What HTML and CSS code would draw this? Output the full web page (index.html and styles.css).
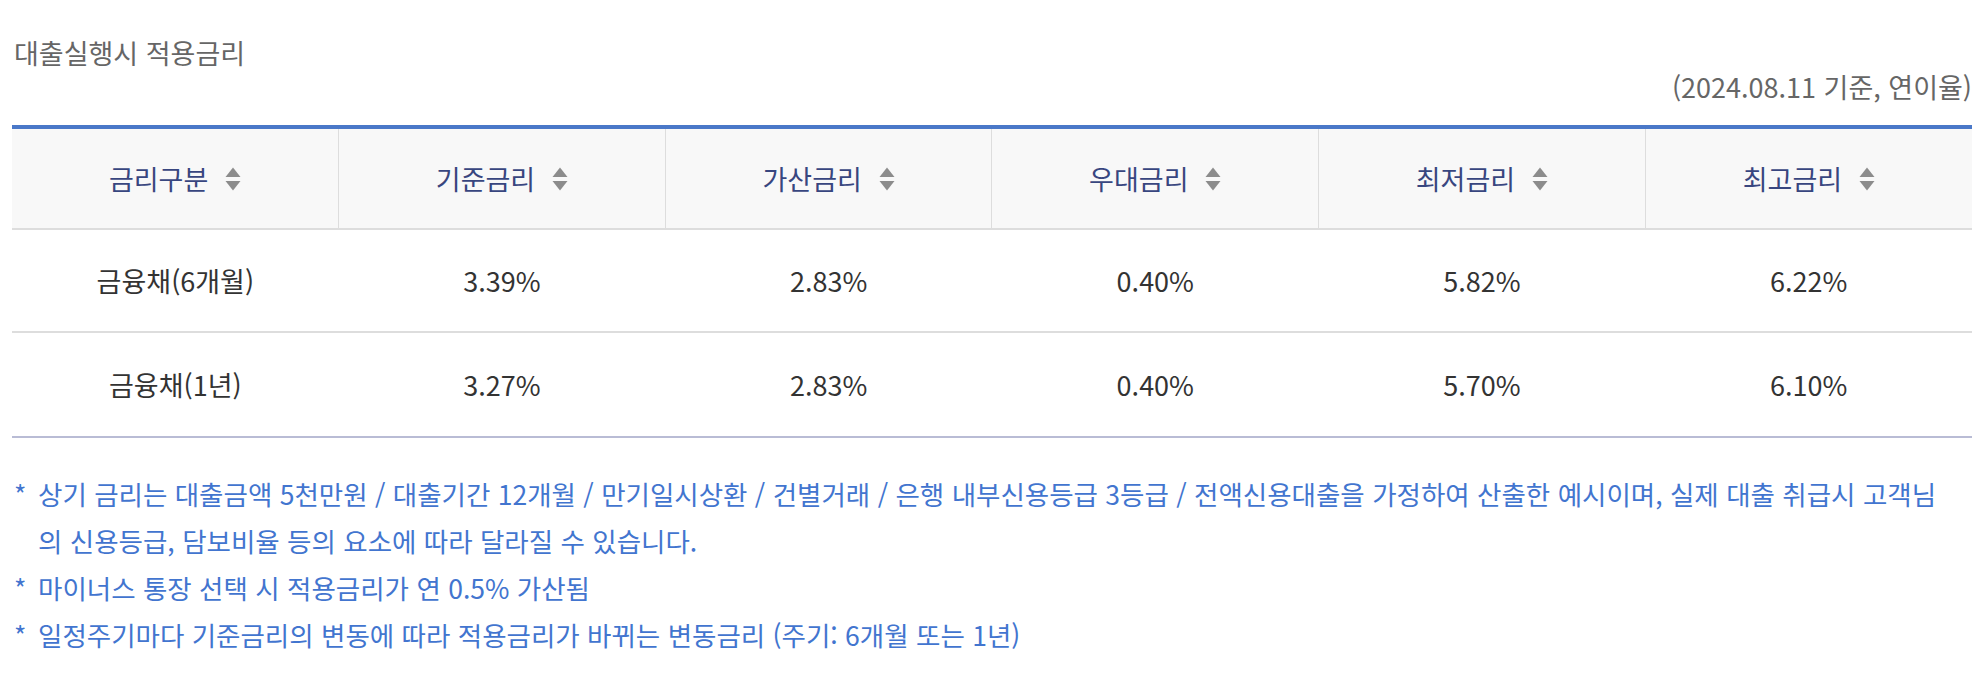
FILE: index.html
```html
<!DOCTYPE html>
<html lang="ko">
<head>
<meta charset="utf-8">
<title>대출실행시 적용금리</title>
<link rel="stylesheet" href="styles.css">
</head>
<body>
<div class="wrap">
  <h2 class="title">대출실행시 적용금리</h2>
  <p class="basis">(2024.08.11 기준, 연이율)</p>
  <table class="rate-table">
    <thead>
      <tr>
        <th><span class="th-in">금리구분<svg class="sort" viewBox="0 0 16 24"><path d="M8 0.5 L15.5 10 L0.5 10 Z"/><path d="M0.5 14 L15.5 14 L8 23.5 Z"/></svg></span></th>
        <th><span class="th-in">기준금리<svg class="sort" viewBox="0 0 16 24"><path d="M8 0.5 L15.5 10 L0.5 10 Z"/><path d="M0.5 14 L15.5 14 L8 23.5 Z"/></svg></span></th>
        <th><span class="th-in">가산금리<svg class="sort" viewBox="0 0 16 24"><path d="M8 0.5 L15.5 10 L0.5 10 Z"/><path d="M0.5 14 L15.5 14 L8 23.5 Z"/></svg></span></th>
        <th><span class="th-in">우대금리<svg class="sort" viewBox="0 0 16 24"><path d="M8 0.5 L15.5 10 L0.5 10 Z"/><path d="M0.5 14 L15.5 14 L8 23.5 Z"/></svg></span></th>
        <th><span class="th-in">최저금리<svg class="sort" viewBox="0 0 16 24"><path d="M8 0.5 L15.5 10 L0.5 10 Z"/><path d="M0.5 14 L15.5 14 L8 23.5 Z"/></svg></span></th>
        <th><span class="th-in">최고금리<svg class="sort" viewBox="0 0 16 24"><path d="M8 0.5 L15.5 10 L0.5 10 Z"/><path d="M0.5 14 L15.5 14 L8 23.5 Z"/></svg></span></th>
      </tr>
    </thead>
    <tbody>
      <tr>
        <td>금융채(6개월)</td><td>3.39%</td><td>2.83%</td><td>0.40%</td><td>5.82%</td><td>6.22%</td>
      </tr>
      <tr>
        <td>금융채(1년)</td><td>3.27%</td><td>2.83%</td><td>0.40%</td><td>5.70%</td><td>6.10%</td>
      </tr>
    </tbody>
  </table>
  <ul class="notes">
    <li><span class="star">*</span><span class="txt">상기 금리는 대출금액 5천만원 / 대출기간 12개월 / 만기일시상환 / 건별거래 / 은행 내부신용등급 3등급 / 전액신용대출을 가정하여 산출한 예시이며, 실제 대출 취급시 고객님의 신용등급, 담보비율 등의 요소에 따라 달라질 수 있습니다.</span></li>
    <li><span class="star">*</span><span class="txt">마이너스 통장 선택 시 적용금리가 연 0.5% 가산됨</span></li>
    <li><span class="star">*</span><span class="txt">일정주기마다 기준금리의 변동에 따라 적용금리가 바뀌는 변동금리 (주기: 6개월 또는 1년)</span></li>
  </ul>
</div>
</body>
</html>
```

FILE: styles.css
```css
html, body {
  margin: 0;
  padding: 0;
  background: #ffffff;
}
body {
  font-family: "Noto Sans CJK KR", "Noto Sans", sans-serif;
  color: #333333;
}
.wrap {
  width: 1960px;
  padding: 0 14px 0 12px;
}
.title {
  margin: 0;
  padding-top: 36px;
  padding-left: 2px;
  font-size: 27px;
  font-weight: 400;
  line-height: 34px;
  color: #666666;
}
.basis {
  margin: 0;
  font-size: 27px;
  line-height: 34px;
  color: #666666;
  text-align: right;
}
.rate-table {
  margin-top: 21px;
  width: 100%;
  border-collapse: collapse;
  table-layout: fixed;
  border-top: 4px solid #4a78c8;
}
.rate-table th {
  height: 99px;
  padding: 0;
  background: #f8f8f8;
  border-bottom: 2px solid #dddddd;
  border-left: 1px solid #dddddd;
  font-size: 27px;
  font-weight: 400;
  color: #38467f;
}
.rate-table th:first-child {
  border-left: none;
}
.th-in {
  display: inline-flex;
  align-items: center;
  gap: 17px;
}
.sort {
  width: 16px;
  height: 24px;
  fill: #8c8c8c;
}
.rate-table td {
  height: 101px;
  padding: 0;
  text-align: center;
  font-size: 27px;
  color: #333333;
  border-bottom: 2px solid #dddddd;
}
.rate-table tbody tr:last-child td {
  height: 103px;
  border-bottom: 2px solid #b9bcd5;
}
.notes {
  list-style: none;
  margin: 0;
  padding: 32px 32px 0 0;
  color: #4275cf;
  font-size: 26.5px;
  line-height: 47px;
}
.notes li {
  display: flex;
}
.star {
  flex: none;
  width: 26px;
  padding-left: 2px;
  box-sizing: border-box;
}
.txt {
  flex: 1;
}
```
